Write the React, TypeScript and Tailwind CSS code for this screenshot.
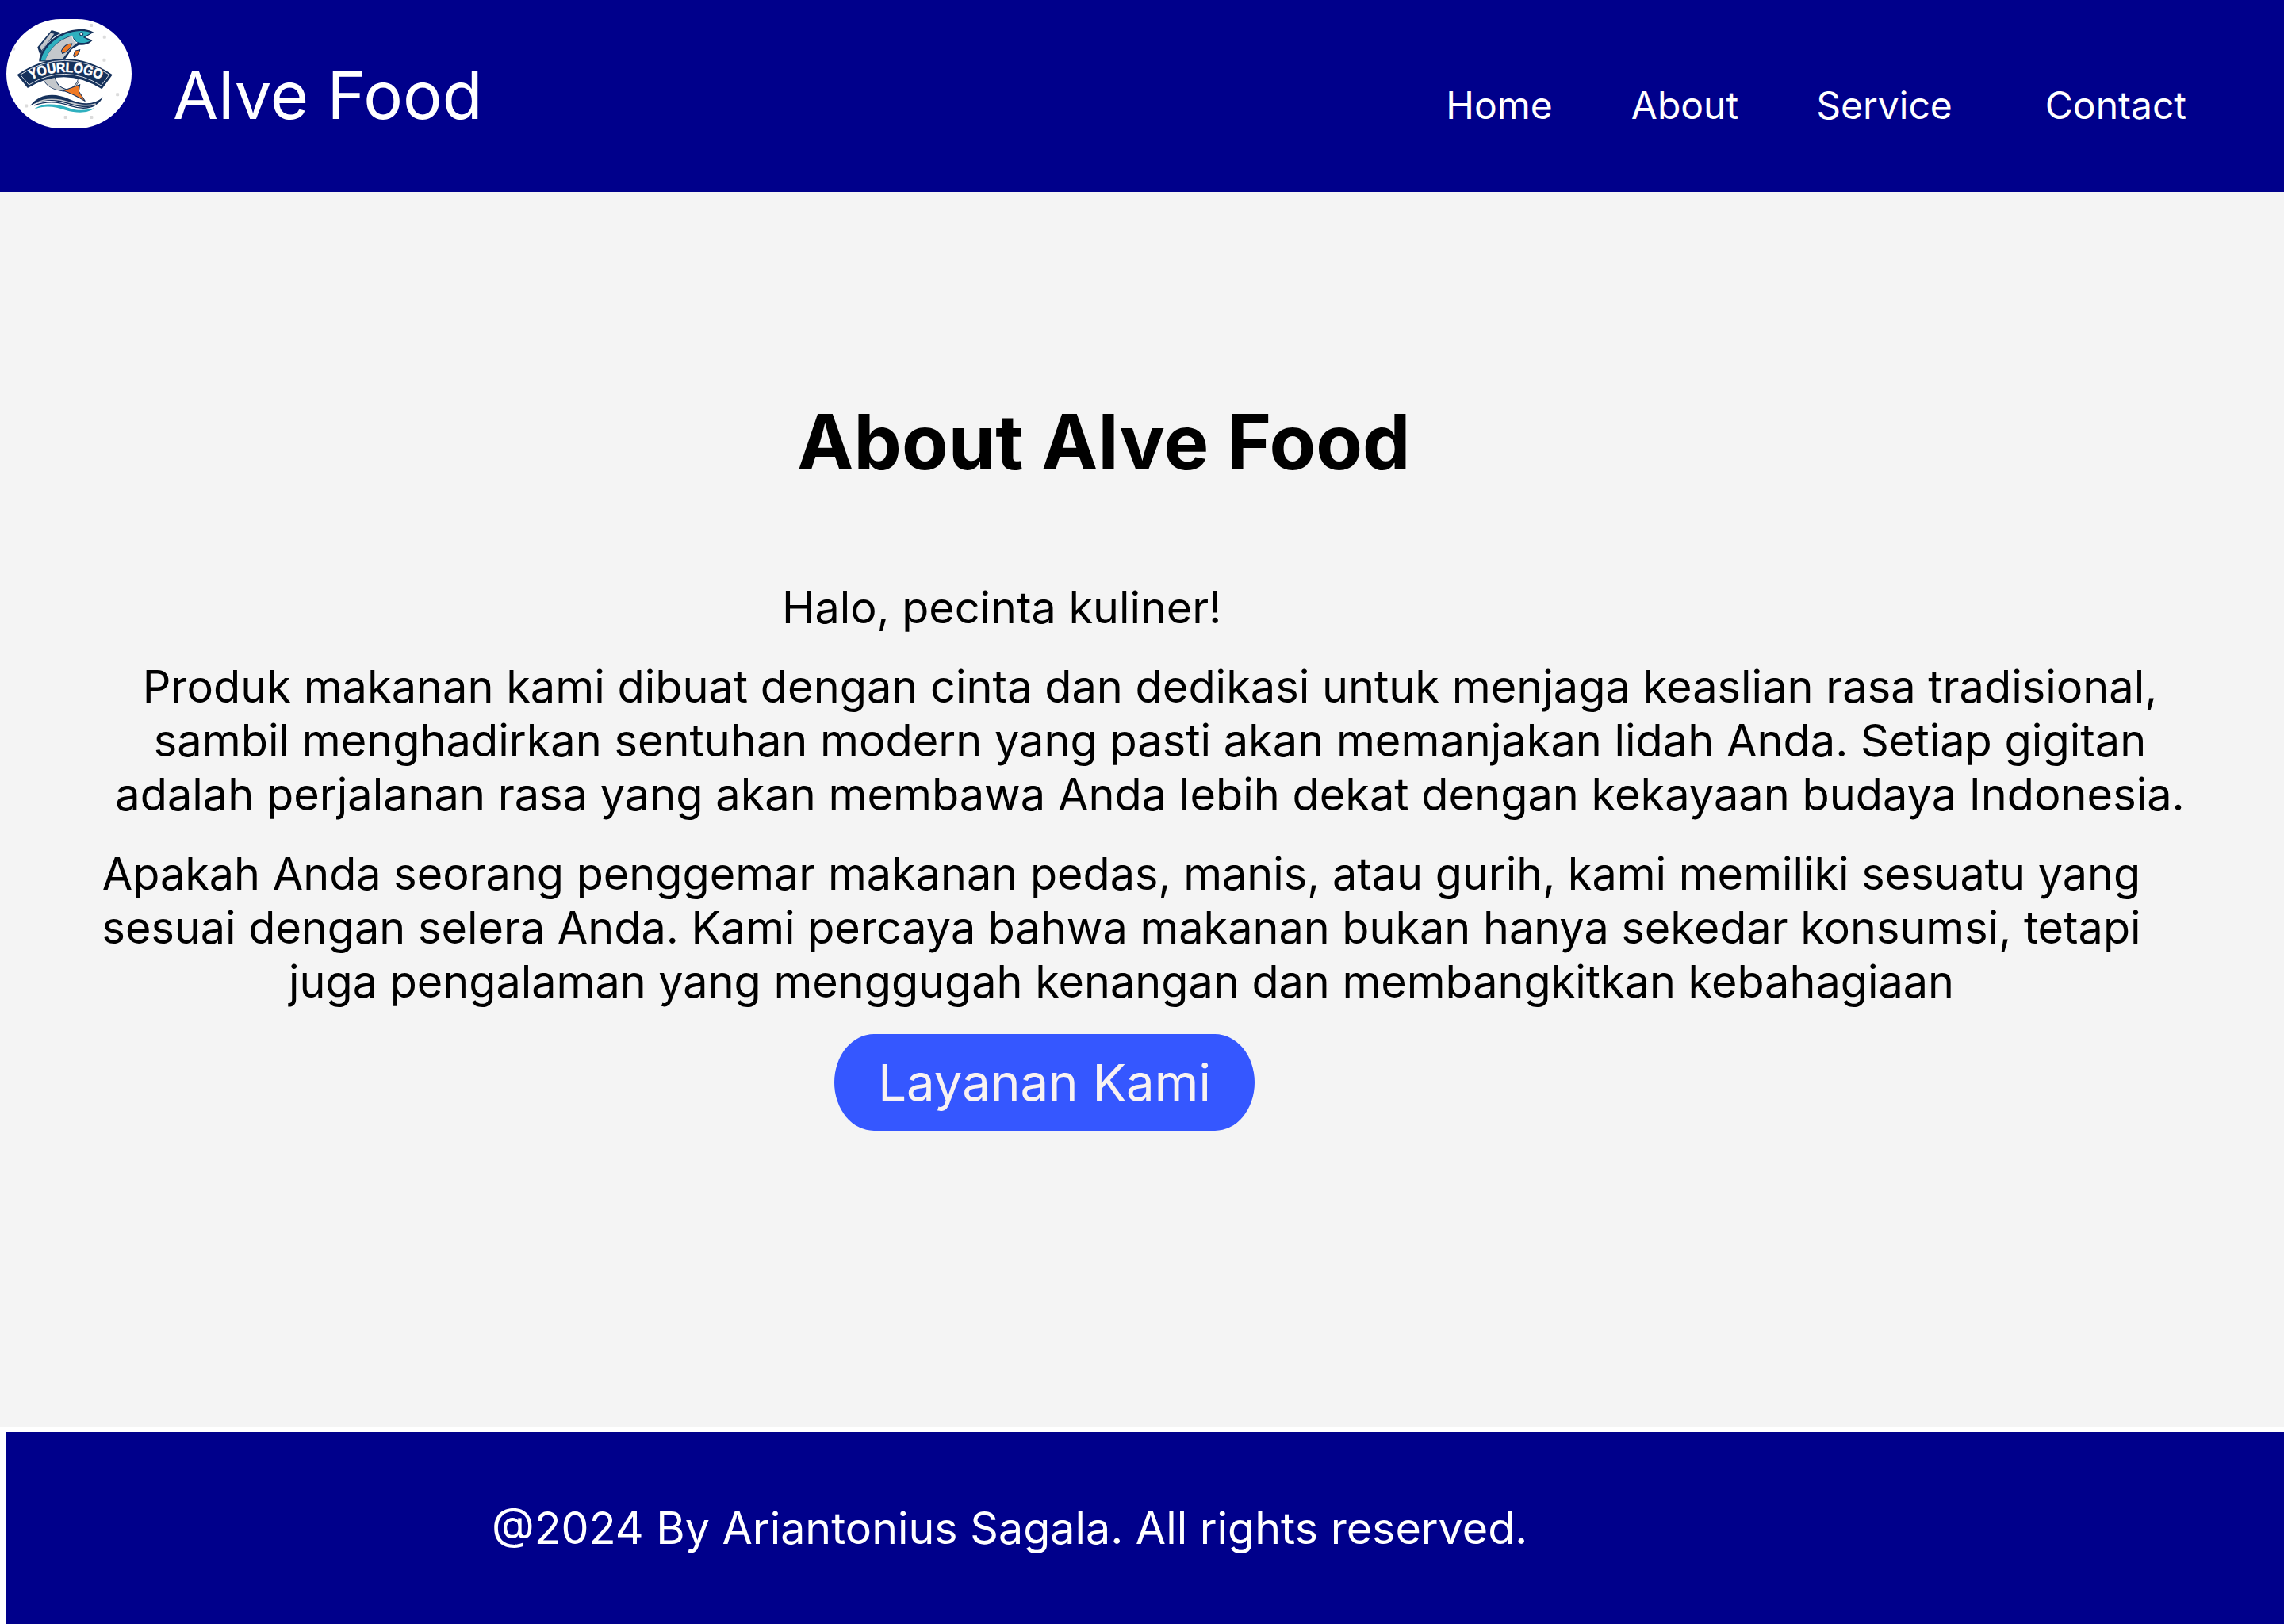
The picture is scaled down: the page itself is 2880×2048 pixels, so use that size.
import React from 'react';

const navItems = [
  { label: 'Home', className: 'ml-0' },
  { label: 'About', className: 'ml-[99px]' },
  { label: 'Service', className: 'ml-[98px]' },
  { label: 'Contact', className: 'ml-[117px]' },
];

const dots = [
  [345, 96], [395, 140], [52, 184], [394, 227], [444, 357], [100, 400], [248, 443], [346, 443],
];

const Logo: React.FC = () => (
  <div className="w-[158px] h-[138px] bg-white rounded-[72px] overflow-hidden shrink-0">
    <svg viewBox="25 72 472 413" className="w-full h-full block">
      {dots.map(([x, y]) => (
        <rect key={`${x}-${y}`} x={x - 6} y={y - 6} width="12" height="12" rx="3" fill="#dcdcdc" />
      ))}
      {/* fish, upper half */}
      <path d="M142 178 L195 114 L232 124 C195 140 168 170 152 208 Z" fill="#16325c" />
      <path d="M150 178 L192 124 L205 128 L158 190 Z" fill="#c4c8cc" />
      <path d="M148 232 C150 180 215 112 305 110 C325 110 345 116 354 122 L322 141 L350 152 C340 165 318 172 298 170 L272 186 L240 232 Z" fill="#16325c" />
      <path d="M156 228 C162 182 222 120 304 117 C322 117 336 120 344 124 L314 141 L340 154 C325 164 305 164 290 158 C282 148 276 142 272 134 C240 142 190 170 172 228 Z" fill="#2fb0bf" />
      <path d="M172 228 C190 172 240 144 272 136 C276 146 284 156 292 162 L270 180 L232 228 Z" fill="#c4c8cc" />
      <path d="M272 134 C274 148 282 158 292 162" fill="none" stroke="#ffffff" strokeWidth="3" />
      <path d="M232 192 C240 175 255 165 272 165 C268 182 252 196 236 202 Z" fill="#f07a25" stroke="#16325c" strokeWidth="3" />
      <path d="M278 210 L284 192 L302 188 C300 200 292 210 282 216 Z" fill="#f07a25" stroke="#16325c" strokeWidth="3" />
      <circle cx="308" cy="128" r="6" fill="#ffffff" stroke="#16325c" strokeWidth="3" />
      {/* fish, below the banner */}
      <path d="M163 296 C172 322 200 340 240 344 L262 340 C230 334 215 320 208 292 L163 292 Z" fill="#c4c8cc" stroke="#16325c" strokeWidth="3" />
      <path d="M298 296 C296 315 280 332 262 340" fill="none" stroke="#16325c" strokeWidth="7" />
      <path d="M298 296 C296 315 280 332 262 340" fill="none" stroke="#c4c8cc" strokeWidth="3" />
      <path d="M240 342 L302 320 L298 345 L322 382 C296 366 268 352 240 342 Z" fill="#f07a25" stroke="#16325c" strokeWidth="3" />
      {/* banner */}
      <path d="M65 282 Q245 162 425 282 L385 336 Q245 248 105 332 Z" fill="#16325c" />
      <path d="M77 282 Q245 175 413 282 L382 323 Q245 238 110 320 Z" fill="none" stroke="#ffffff" strokeWidth="2.5" />
      <path id="logo-arc" d="M110 304 Q245 240 388 304" fill="none" />
      <text className="font-['Liberation_Sans',sans-serif] font-bold" fontSize="52" fill="#ffffff" stroke="#ffffff" strokeWidth="2">
        <textPath href="#logo-arc" startOffset="50%" textAnchor="middle" textLength="272" lengthAdjust="spacingAndGlyphs">YOURLOGO</textPath>
      </text>
      {/* waves */}
      <path d="M114 400 C150 350 210 350 262 374 C310 396 360 396 388 366 C372 410 316 412 262 394 C215 378 160 372 114 400 Z" fill="#16325c" />
      <path d="M140 388 C180 366 225 374 268 388 C300 398 330 402 362 392" fill="none" stroke="#c4c8cc" strokeWidth="5" />
      <path d="M130 398 C180 378 225 384 268 400 C300 410 335 410 358 398" fill="none" stroke="#16325c" strokeWidth="4" />
      <path d="M130 412 C165 385 215 392 262 408 C294 420 330 416 356 408 C336 428 290 428 250 416 C210 402 170 396 130 412 Z" fill="#2fb0bf" />
    </svg>
  </div>
);

export default function App() {
  return (
    <div className="w-[2880px] h-[2048px] overflow-hidden bg-white font-['Inter',sans-serif] flex flex-col">
      <header className="h-[242px] shrink-0 bg-[#00008b] text-white flex">
        <div className="pl-2 pt-6">
          <Logo />
        </div>
        <h1 className="ml-[52px] mt-[70px] text-[83px] leading-[100px] font-normal">Alve Food</h1>
        <nav className="ml-auto pr-[123px] pt-[104px] flex items-start text-[48px] leading-[58px]">
          {navItems.map((item) => (
            <a key={item.label} className={item.className} href="#">{item.label}</a>
          ))}
        </nav>
      </header>

      <main className="h-[1558px] shrink-0 bg-[#f4f4f4] text-black flex flex-col items-start">
        <h2 className="mt-[257px] ml-[1005px] text-[95.8px] leading-[116px] font-bold">About Alve Food</h2>
        <p className="mt-[117px] ml-[986px] text-[55.7px] leading-[68px]">Halo, pecinta kuliner!</p>
        <p className="mt-[32px] ml-[130px] w-[2640px] text-center text-[55.9px] leading-[68px]">
          Produk makanan kami dibuat dengan cinta dan dedikasi untuk menjaga keaslian rasa tradisional, sambil menghadirkan sentuhan modern yang pasti akan memanjakan lidah Anda. Setiap gigitan adalah perjalanan rasa yang akan membawa Anda lebih dekat dengan kekayaan budaya Indonesia.
        </p>
        <p className="mt-[32px] ml-[114px] w-[2600px] text-center text-[55.75px] leading-[68px]">
          Apakah Anda seorang penggemar makanan pedas, manis, atau gurih, kami memiliki sesuatu yang sesuai dengan selera Anda. Kami percaya bahwa makanan bukan hanya sekedar konsumsi, tetapi juga pengalaman yang menggugah kenangan dan membangkitkan kebahagiaan
        </p>
        <button className="mt-[32px] ml-[1052px] w-[530px] h-[122px] rounded-[50px/61px] bg-[#3557ff] text-[#f8f2f2] text-[63.5px] leading-[78px]">
          Layanan Kami
        </button>
      </main>

      <footer className="mt-[6px] ml-2 h-[242px] shrink-0 bg-[#00008b] text-white">
        <p className="ml-[612px] mt-[87px] text-[55.6px] leading-[68px]">@2024 By Ariantonius Sagala. All rights reserved.</p>
      </footer>
    </div>
  );
}
